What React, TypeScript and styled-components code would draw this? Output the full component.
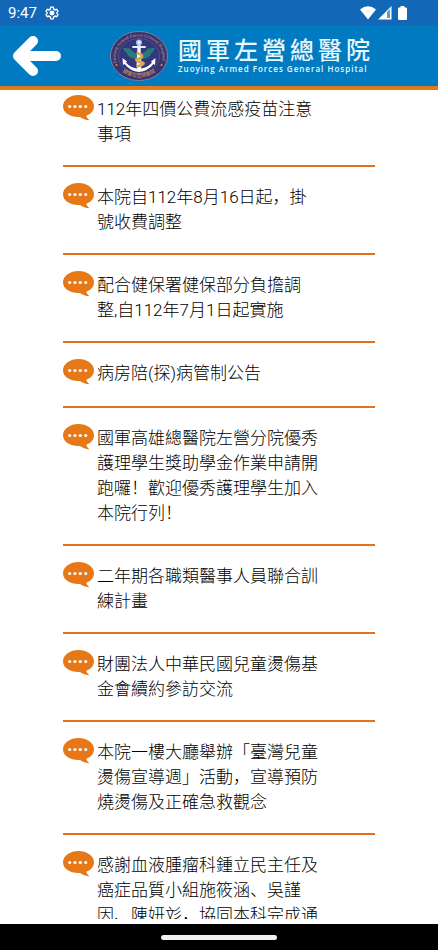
import React from "react";
import styled, { createGlobalStyle } from "styled-components";

const GlobalStyle = createGlobalStyle`
  * { box-sizing: border-box; }
  html, body { margin: 0; padding: 0; background: #fff; }
  body { font-family: Roboto, "Noto Sans CJK SC", sans-serif; color: #000; }
`;

const Screen = styled.div`
  display: flex;
  flex-direction: column;
  height: 100vh;
  overflow: hidden;
  background: #fff;
`;

const StatusBar = styled.div`
  display: flex;
  flex: none;
  align-items: center;
  justify-content: space-between;
  height: 25px;
  padding: 1px 28px 0 8px;
  background: #1268b7;
  color: #fff;
`;

const StatusGroup = styled.div`
  display: flex;
  align-items: center;
  gap: 8px;
`;

const StatusIcons = styled(StatusGroup)`
  gap: 2px;
`;

const Clock = styled.time`
  font-size: 15px;
  line-height: 24px;
`;

const Header = styled.header`
  display: flex;
  flex: none;
  align-items: center;
  height: 65px;
  padding: 0 12px;
  border-top: 1px solid #0a70bc;
  border-bottom: 4px solid #e37817;
  background: #007bc2;
  color: #fff;
`;

const BackButton = styled.button`
  display: flex;
  width: 50px;
  padding: 0;
  border: 0;
  background: none;
  color: inherit;
  cursor: pointer;
`;

const Brand = styled.a`
  display: flex;
  align-items: center;
  gap: 10px;
  margin-left: 48px;
  color: #e4f8fd;
  text-decoration: none;
`;

const BrandText = styled.div`
  display: flex;
  flex-direction: column;
  gap: 2px;
  padding-bottom: 4px;
  white-space: nowrap;
`;

const BrandName = styled.span`
  font-family: "Noto Sans CJK TC", sans-serif;
  font-size: 24px;
  font-weight: 500;
  line-height: 28px;
  letter-spacing: 4px;
`;

const BrandLatin = styled.span`
  font-family: "Open Sans", sans-serif;
  font-size: 8px;
  font-weight: 600;
  line-height: 8px;
  letter-spacing: 1px;
`;

const Main = styled.main`
  flex: 1;
  min-height: 0;
  margin-bottom: 5px;
  padding: 0 63px;
  overflow: hidden;
`;

const NewsList = styled.ul`
  margin: 0;
  padding: 0;
  list-style: none;
`;

const NewsItem = styled.li`
  min-height: 65px;
  padding: 16px 0 18px;
  border-bottom: 2px solid #e5701b;

  &:first-child { padding-top: 5px; }
`;

const NewsLink = styled.a`
  display: flex;
  align-items: flex-start;
  gap: 3px;
  color: inherit;
  text-decoration: none;
`;

const NewsTitle = styled.span`
  flex: 0 1 222px;
  padding-top: 2px;
  font-size: 17px;
  font-weight: 300;
  line-height: 25px;
`;

const NavBar = styled.footer`
  display: flex;
  flex: none;
  align-items: center;
  justify-content: center;
  height: 26px;
  background: #000;
`;

const HomeHandle = styled.button`
  width: 116px;
  height: 5px;
  padding: 0;
  border: 0;
  border-radius: 3px;
  background: #f1f1f1;
`;

const GearIcon = () => (
  <svg width="14" height="14" viewBox="0 0 24 24" fill="#fff" aria-hidden="true">
    <path
      fillRule="evenodd"
      d="M9 1h6l.7 3.3 1.8 1 3.2-1 3 5.200-2.500 2.200v.6l2.500 2.200-3 5.200-3.200-1-1.800 1L15 23H9l-.7-3.300-1.800-1-3.200 1-3-5.200 2.500-2.200v-.6L.3 9.500l3-5.200 3.200 1 1.800-1zM10.700 3.200 10.200 6 6.800 8 4.200 7.100 2.900 9.300 5 11.100v1.800l-2.100 1.800 1.300 2.200L6.800 16l3.400 2 .5 2.800h2.600l.5-2.800 3.400-2 2.600.9 1.300-2.200-2.100-1.800v-1.800l2.100-1.800-1.300-2.200-2.600.9-3.400-2-.5-2.800zM12 7.800a4.200 4.200 0 1 1 0 8.400 4.200 4.200 0 0 1 0-8.400z"
    />
  </svg>
);

const WifiIcon = () => (
  <svg width="16" height="14" viewBox="0 0 16 14" aria-hidden="true">
    <path d="M0 3.500Q8-3 16 3.500L8 13.500Z" fill="#fff" />
  </svg>
);

const SignalIcon = () => (
  <svg width="14" height="14" viewBox="0 0 14 14" aria-hidden="true">
    <path d="M13.500 0V13.500H0ZM9.300 6v6h2.700V3.300Z" fill="#fff" fillRule="evenodd" />
    <path d="M9.300 6v6h2.700V3.300Z" fill="#5f9ad0" />
  </svg>
);

const BatteryIcon = () => (
  <svg width="16" height="14" viewBox="0 0 16 14" aria-hidden="true">
    <path d="M6.500 0h4v1.500h1.500q1 0 1 1V13q0 1-1 1H5q-1 0-1-1V2.500q0-1 1-1h1.500z" fill="#fff" />
  </svg>
);

const ArrowIcon = () => (
  <svg width="50" height="42" viewBox="0 0 50 42" aria-hidden="true">
    <path
      d="M21 6 6 21 21 36M8 21H44"
      fill="none"
      stroke="#fff"
      strokeWidth="10"
      strokeLinecap="round"
      strokeLinejoin="round"
    />
  </svg>
);

const Emblem = () => (
  <svg width="58" height="50" viewBox="0 0 58 50" aria-hidden="true">
    <defs>
      <path id="ring-top" d="M6.500 32A23.500 20.500 0 1 1 51.500 32" />
      <path id="ring-bottom" d="M8 36.500A25.500 22 0 0 0 50 36.500" />
    </defs>
    <ellipse cx="29" cy="25" rx="28.500" ry="24.500" fill="#373474" stroke="#9a8a9b" strokeWidth=".8" />
    <ellipse cx="29" cy="25" rx="20.500" ry="17.500" fill="#33377e" stroke="#75608a" strokeWidth=".6" />
    <text fill="#a08088" fontFamily="Liberation Serif, serif" fontSize="4.500" fontWeight="700">
      <textPath href="#ring-top">Zuoying Armed Forces General Hospital</textPath>
    </text>
    <text fill="#b07f55" fontFamily="Noto Sans CJK TC, sans-serif" fontSize="5" fontWeight="700">
      <textPath href="#ring-bottom" startOffset="50%" textAnchor="middle">
        國軍左營總醫院
      </textPath>
    </text>
    <circle cx="6.500" cy="34" r="1.100" fill="#d08a45" />
    <circle cx="51.500" cy="34" r="1.100" fill="#d08a45" />
    <path
      d="M28 23Q22 21 20 17.500L13 17Q14 21 17 22.500 18 26 23 27.500L28 28ZM30 23Q36 21 38 17.500L45 17Q44 21 41 22.500 40 26 35 27.500L30 28Z"
      fill="#277a79"
    />
    <path d="M27.500 14h3l1 22-2.500 4-2.500-4z" fill="#f4f6fa" />
    <path d="M23 16h12" stroke="#e8eef8" strokeWidth="1.800" strokeLinecap="round" />
    <circle cx="29" cy="11.500" r="3" fill="#a8c3e8" />
    <circle cx="29" cy="11.500" r="1.400" fill="#fff" />
    <path
      d="M12.500 27 17 30.500 16 31.500Q20 36.500 27 37.500L29 36.500 31 37.500Q38 36.500 42 31.500L41 30.500 45.500 27 45 34 43.500 33Q38 40 29 41 20 40 14.500 33L13 34Z"
      fill="#fff"
    />
    <path
      d="M26.500 22q5 1 5.500 3t-5.500 3.500q-.5 2 5 3t-4.500 4"
      fill="none"
      stroke="#dfa650"
      strokeWidth="2.800"
    />
  </svg>
);

const BubbleIcon = () => (
  <svg width="31" height="26" viewBox="0 0 31 26" aria-hidden="true">
    <path
      d="M15.500 0C24 0 31 4.900 31 11.200 31 15.600 28 19 23.300 20.700 23.500 22.500 25 24 26.500 25.300 23 25.200 19.500 23.500 17 21.900 7.500 22.400 0 18 0 11.200 0 4.900 7 0 15.500 0Z"
      fill="#e67817"
    />
    <g fill="#fff">
      <circle cx="6.700" cy="11.500" r="1.600" />
      <circle cx="12" cy="11.500" r="1.600" />
      <circle cx="17.300" cy="11.500" r="1.600" />
      <circle cx="22.700" cy="11.500" r="1.600" />
    </g>
  </svg>
);

const news = [
  "112年四價公費流感疫苗注意事項",
  "本院自112年8月16日起，掛號收費調整",
  "配合健保署健保部分負擔調整,自112年7月1日起實施",
  "病房陪(探)病管制公告",
  "國軍高雄總醫院左營分院優秀護理學生獎助學金作業申請開跑囉！歡迎優秀護理學生加入本院行列！",
  "二年期各職類醫事人員聯合訓練計畫",
  "財團法人中華民國兒童燙傷基金會續約參訪交流",
  "本院一樓大廳舉辦「臺灣兒童燙傷宣導週」活動，宣導預防燒燙傷及正確急救觀念",
  "感謝血液腫瘤科鍾立民主任及癌症品質小組施筱涵、吳謹因、陳妍彣，協同本科完成通",
];

export default function App() {
  return (
    <Screen>
      <GlobalStyle />
      <StatusBar>
        <StatusGroup>
          <Clock>9:47</Clock>
          <GearIcon />
        </StatusGroup>
        <StatusIcons>
          <WifiIcon />
          <SignalIcon />
          <BatteryIcon />
        </StatusIcons>
      </StatusBar>
      <Header>
        <BackButton type="button" aria-label="返回">
          <ArrowIcon />
        </BackButton>
        <Brand href="#">
          <Emblem />
          <BrandText>
            <BrandName>國軍左營總醫院</BrandName>
            <BrandLatin>Zuoying Armed Forces General Hospital</BrandLatin>
          </BrandText>
        </Brand>
      </Header>
      <Main>
        <NewsList>
          {news.map((title) => (
            <NewsItem key={title}>
              <NewsLink href="#">
                <BubbleIcon />
                <NewsTitle>{title}</NewsTitle>
              </NewsLink>
            </NewsItem>
          ))}
        </NewsList>
      </Main>
      <NavBar>
        <HomeHandle type="button" aria-label="主畫面" />
      </NavBar>
    </Screen>
  );
}
